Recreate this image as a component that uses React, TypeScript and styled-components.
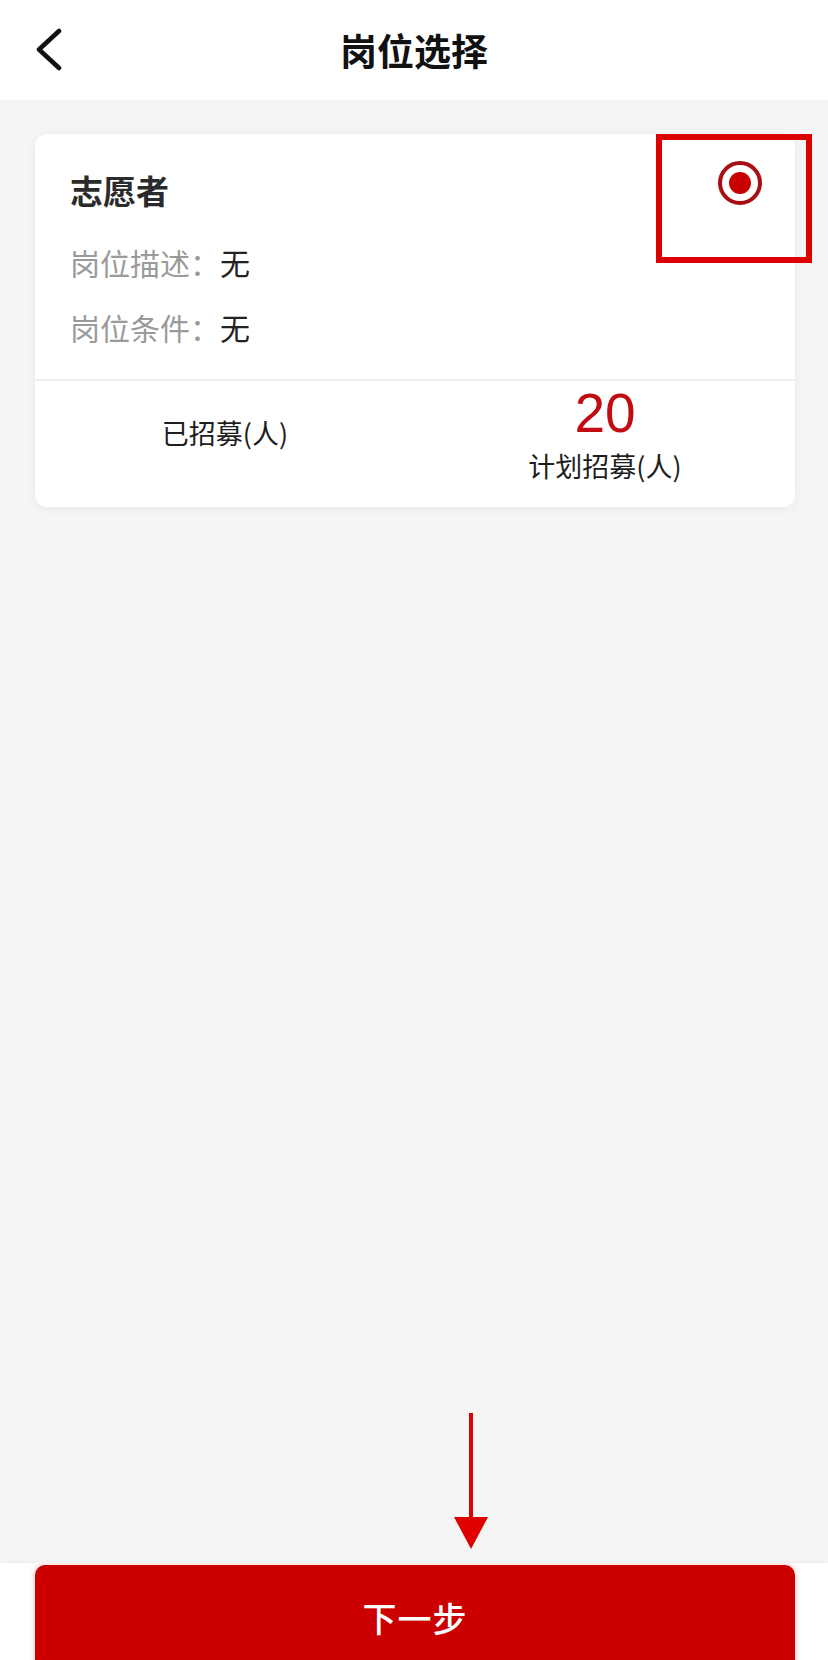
import React, { useState } from 'react'
import styled, { createGlobalStyle } from 'styled-components'

const GlobalStyle = createGlobalStyle`
  html, body {
    margin: 0;
    padding: 0;
    background: #ffffff;
  }
  body {
    font-family: "Noto Sans CJK SC", "Noto Sans", sans-serif;
    overflow: hidden;
  }
  * {
    box-sizing: border-box;
  }
`

const Page = styled.div`
  width: 828px;
  height: 1660px;
  display: flex;
  flex-direction: column;
  background: #f5f5f5;
`

const Header = styled.header`
  height: 100px;
  flex-shrink: 0;
  display: grid;
  grid-template-columns: 1fr auto 1fr;
  align-items: center;
  background: #ffffff;
  padding: 0 34px;
`

const BackButton = styled.button`
  width: 34px;
  height: 48px;
  padding: 0;
  border: none;
  background: none;
  display: flex;
  align-items: center;
  justify-self: start;
  cursor: pointer;
`

const Title = styled.h1`
  margin: 0;
  font-size: 37px;
  line-height: 48px;
  font-weight: 700;
  color: #111111;
`

const Content = styled.main`
  position: relative;
  flex: 1;
  padding: 34px 33px 0 35px;
`

const Card = styled.section`
  position: relative;
  background: #ffffff;
  border-radius: 12px;
  box-shadow: 0 2px 12px rgba(0, 0, 0, 0.05);
`

const CardBody = styled.div`
  padding: 36px 33px 19px 35px;
`

const TitleRow = styled.div`
  display: flex;
  justify-content: space-between;
  align-items: flex-start;
  margin-bottom: 20px;
`

const JobName = styled.div`
  font-size: 33px;
  line-height: 40px;
  font-weight: 600;
  color: #2b2b2b;
`

const Radio = styled.span<{ checked: boolean }>`
  width: 44px;
  height: 44px;
  margin-top: -9px;
  border-radius: 50%;
  border: 4px solid ${(p) => (p.checked ? '#a80f14' : '#cccccc')};
  display: flex;
  align-items: center;
  justify-content: center;
  cursor: pointer;

  &::after {
    content: '';
    width: 22px;
    height: 22px;
    border-radius: 50%;
    background: ${(p) => (p.checked ? '#c80000' : 'transparent')};
  }
`

const InfoRow = styled.div`
  font-size: 30px;
  line-height: 65px;
  color: #222222;
`

const InfoLabel = styled.span`
  color: #9a9a9a;
`

const Divider = styled.div`
  height: 2px;
  background: #eeeeee;
`

const Stats = styled.div`
  display: grid;
  grid-template-columns: 1fr 1fr;
  height: 126px;
`

const StatColumn = styled.div<{ offset: number }>`
  display: flex;
  flex-direction: column;
  align-items: center;
  padding-top: ${(p) => p.offset}px;
`

const StatNumber = styled.div`
  font-family: "Liberation Sans", Arial, sans-serif;
  font-size: 55px;
  line-height: 56px;
  color: #c10d12;
`

const StatLabel = styled.div`
  font-size: 27px;
  line-height: 36px;
  color: #1e1e1e;
  margin-top: 7px;
`

const MarkBox = styled.div`
  position: absolute;
  top: 0;
  right: -17px;
  width: 156px;
  height: 129px;
  border: 6px solid #dd0000;
  pointer-events: none;
`

const Arrow = styled.svg`
  position: absolute;
  left: 454px;
  top: 1313px;
`

const Footer = styled.footer`
  height: 97px;
  flex-shrink: 0;
  background: #ffffff;
  padding: 2px 33px 0 35px;
  overflow: hidden;
  box-shadow: 0 -1px 3px rgba(0, 0, 0, 0.03);
`

const NextButton = styled.button`
  width: 100%;
  height: 106px;
  border: none;
  border-radius: 10px;
  background: #cc0000;
  color: #ffffff;
  font-family: "Noto Sans CJK SC", "Noto Sans", sans-serif;
  font-size: 34px;
  font-weight: 500;
  letter-spacing: 1px;
  padding-bottom: 2px;
  box-shadow: 0 0 6px rgba(204, 0, 0, 0.25);
  cursor: pointer;
`

const BackIcon = () => (
  <svg width="30" height="44" viewBox="0 0 30 44">
    <polyline points="25,3 5,21.5 25,40" fill="none" stroke="#111" strokeWidth="4.5" strokeLinecap="round" strokeLinejoin="round" />
  </svg>
)

const App: React.FC = () => {
  const [selected, setSelected] = useState(true)

  return (
    <Page>
      <GlobalStyle />
      <Header>
        <BackButton aria-label="返回">
          <BackIcon />
        </BackButton>
        <Title>岗位选择</Title>
        <div />
      </Header>
      <Content>
        <Card>
          <CardBody>
            <TitleRow>
              <JobName>志愿者</JobName>
              <Radio checked={selected} onClick={() => setSelected((s) => !s)} />
            </TitleRow>
            <InfoRow>
              <InfoLabel>岗位描述：</InfoLabel>无
            </InfoRow>
            <InfoRow>
              <InfoLabel>岗位条件：</InfoLabel>无
            </InfoRow>
          </CardBody>
          <Divider />
          <Stats>
            <StatColumn offset={27}>
              <StatLabel>已招募(人)</StatLabel>
            </StatColumn>
            <StatColumn offset={4}>
              <StatNumber>20</StatNumber>
              <StatLabel>计划招募(人)</StatLabel>
            </StatColumn>
          </Stats>
          <MarkBox />
        </Card>
        <Arrow width="34" height="136" viewBox="0 0 34 136">
          <rect x="15" y="0" width="4" height="106" fill="#e00000" />
          <polygon points="0,104 34,104 17,136" fill="#e00000" />
        </Arrow>
      </Content>
      <Footer>
        <NextButton>下一步</NextButton>
      </Footer>
    </Page>
  )
}

export default App
